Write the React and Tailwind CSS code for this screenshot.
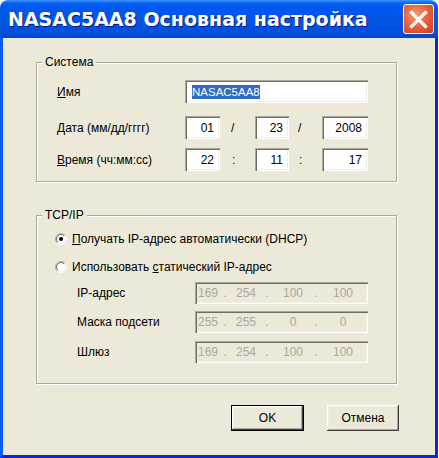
import React from 'react';

const sunken =
  'shadow-[inset_1px_1px_0_#ACA899,inset_2px_2px_0_#716F64,inset_-1px_-1px_0_#FFFFFF,inset_-2px_-2px_0_#F1EFE2]';

function Radio({ checked }) {
  return (
    <svg width="12" height="12" viewBox="0 0 12 12" className="shrink-0">
      <defs>
        <linearGradient id="ro" x1="0" y1="0" x2="1" y2="1">
          <stop offset="0.45" stopColor="#ACA899" />
          <stop offset="0.55" stopColor="#FFFFFF" />
        </linearGradient>
        <linearGradient id="ri" x1="0" y1="0" x2="1" y2="1">
          <stop offset="0.45" stopColor="#716F64" />
          <stop offset="0.55" stopColor="#F1EFE2" />
        </linearGradient>
      </defs>
      <circle cx="6" cy="6" r="5.5" fill="none" stroke="url(#ro)" />
      <circle cx="6" cy="6" r="4.5" fill="#FFFFFF" stroke="url(#ri)" />
      {checked && <circle cx="6" cy="6" r="2" fill="#000000" />}
    </svg>
  );
}

function Box({ w, value }) {
  return (
    <div className={`${w} h-[23px] flex items-center justify-end pr-[6px] bg-white ${sunken}`}>
      {value}
    </div>
  );
}

// disabled IP address control
function IpBox({ parts }) {
  return (
    <div className={`w-[173px] h-[22px] flex items-center pl-[2px] bg-[#ECE9D8] text-[#ACA899] ${sunken}`}>
      <span className="w-[22px] text-center">{parts[0]}</span>
      <span className="w-[12px] text-center">.</span>
      <span className="w-[30px] text-center">{parts[1]}</span>
      <span className="w-[12px] text-center">.</span>
      <span className="w-[40px] text-center">{parts[2]}</span>
      <span className="w-[6px] text-center">.</span>
      <span className="w-[48px] text-center">{parts[3]}</span>
    </div>
  );
}

export default function App() {
  return (
    <div className="w-[439px] h-[458px] bg-white font-['Liberation_Sans',Arial,sans-serif] text-[12px] text-black leading-[14px]">
      <div className="w-[438px] h-[458px] flex flex-col">
        {/* Title bar */}
        <div className="h-[38px] rounded-t-[8px] bg-[linear-gradient(to_bottom,#3D95FF_0%,#0A61F3_8%,#0058EE_18%,#0055E5_55%,#0050DC_85%,#0046CC_100%)] flex items-center justify-between pl-[8px] pr-[4px]">
          <span className="font-['DejaVu_Sans',sans-serif] font-bold text-[19px] leading-none text-white [text-shadow:1px_1px_0_#0A1883]">
            NASAC5AA8 Основная настройка
          </span>
          <div className="w-[31px] h-[30px] rounded-[3px] border border-white bg-[radial-gradient(circle_at_40%_35%,#F39A78_0%,#E5603A_50%,#CC3E1E_100%)] flex items-center justify-center">
            <svg width="19" height="19" viewBox="0 0 19 19">
              <path d="M2.5 2.5 L16.5 16.5 M16.5 2.5 L2.5 16.5" stroke="#FFFFFF" strokeWidth="3.2" strokeLinecap="square" />
            </svg>
          </div>
        </div>

        {/* Body */}
        <div className="flex-1 border-x-[3px] border-b-[3px] border-l-[#0A5CF2] border-r-[#0A2BC8] border-b-[#0A2BC8] bg-[#ECE9D8] pl-[33px] pt-[17px]">
          {/* Система */}
          <fieldset className="w-[361px] border border-[#ACA899] shadow-[inset_1px_1px_0_#FFFFFF,1px_1px_0_#FFFFFF] px-0 pt-[11px] pb-[10px]">
            <legend className="ml-[5px] px-[3px] bg-[#ECE9D8]">Система</legend>
            <div className="flex items-center h-[23px] pl-[20px]">
              <span className="w-[128px]"><u className="underline">И</u>мя</span>
              <div className={`w-[183px] h-[23px] flex items-center pl-[7px] bg-white ${sunken}`}>
                <span className="bg-[#316AC5] text-white text-[11.5px]">NASAC5AA8</span>
              </div>
            </div>
            <div className="flex items-center h-[23px] pl-[20px] mt-[13px]">
              <span className="w-[128px]"><u className="underline">Д</u>ата (мм/дд/гггг)</span>
              <Box w="w-[35px]" value="01" />
              <span className="w-[35px] pl-[11px]">/</span>
              <Box w="w-[34px]" value="23" />
              <span className="w-[33px] pl-[9px]">/</span>
              <Box w="w-[46px]" value="2008" />
            </div>
            <div className="flex items-center h-[23px] pl-[20px] mt-[9px]">
              <span className="w-[128px]"><u className="underline">В</u>ремя (чч:мм:сс)</span>
              <Box w="w-[35px]" value="22" />
              <span className="w-[35px] pl-[12px]">:</span>
              <Box w="w-[34px]" value="11" />
              <span className="w-[33px] pl-[10px]">:</span>
              <Box w="w-[46px]" value="17" />
            </div>
          </fieldset>

          {/* TCP/IP */}
          <fieldset className="w-[361px] mt-[26px] border border-[#ACA899] shadow-[inset_1px_1px_0_#FFFFFF,1px_1px_0_#FFFFFF] px-0 pt-[10px] pb-[20px]">
            <legend className="ml-[5px] px-[3px] bg-[#ECE9D8]">TCP/IP</legend>
            <div className="flex items-center gap-[5px] pl-[18px] h-[14px]">
              <Radio checked />
              <span><u className="underline">П</u>олучать IP-адрес автоматически (DHCP)</span>
            </div>
            <div className="flex items-center gap-[5px] pl-[18px] h-[14px] mt-[14px]">
              <Radio />
              <span>Использовать <u className="underline">с</u>татический IP-адрес</span>
            </div>
            <div className="flex items-center pl-[40px] mt-[8px]">
              <span className="w-[118px]">IP-адрес</span>
              <IpBox parts={['169', '254', '100', '100']} />
            </div>
            <div className="flex items-center pl-[40px] mt-[7px]">
              <span className="w-[118px]">Маска подсети</span>
              <IpBox parts={['255', '255', '0', '0']} />
            </div>
            <div className="flex items-center pl-[40px] mt-[8px]">
              <span className="w-[118px]">Шлюз</span>
              <IpBox parts={['169', '254', '100', '100']} />
            </div>
          </fieldset>

          {/* Buttons */}
          <div className="flex justify-end gap-[23px] mt-[21px] pr-[36px]">
            <button className="w-[73px] h-[26px] border border-black bg-[#ECE9D8] shadow-[inset_-1px_-1px_0_#404040,inset_1px_1px_0_#FFFFFF,inset_-2px_-2px_0_#ACA899,inset_2px_2px_0_#F1EFE2]">
              OK
            </button>
            <button className="w-[72px] h-[26px] bg-[#ECE9D8] shadow-[inset_-1px_-1px_0_#404040,inset_1px_1px_0_#FFFFFF,inset_-2px_-2px_0_#ACA899,inset_2px_2px_0_#F1EFE2]">
              Отмена
            </button>
          </div>
        </div>
      </div>
    </div>
  );
}
